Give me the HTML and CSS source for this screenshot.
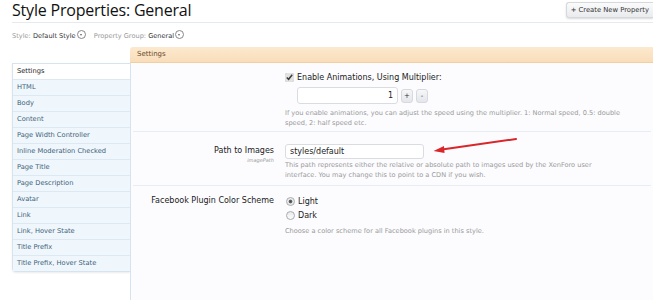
FILE: index.html
```html
<!DOCTYPE html>
<html lang="en">
<head>
    <meta charset="UTF-8">
    <title>Style Properties: General</title>
    <link rel="stylesheet" href="styles.css">
</head>
<body>
    <!-- Title bar -->
    <div class="title-bar">
        <h1>Style Properties: General</h1>
        <a class="top-button" href="#">+ Create New Property</a>
    </div>

    <!-- Style / group selectors -->
    <div class="selectors">
        <span class="muted">Style:</span> Default Style<span class="chooser"></span>
        <span class="muted gap">Property Group:</span> General<span class="chooser"></span>
    </div>

    <div class="layout">
        <!-- Property group list -->
        <ul class="side-list">
            <li class="active">Settings</li>
            <li>HTML</li>
            <li>Body</li>
            <li>Content</li>
            <li>Page Width Controller</li>
            <li>Inline Moderation Checked</li>
            <li>Page Title</li>
            <li>Page Description</li>
            <li>Avatar</li>
            <li>Link</li>
            <li>Link, Hover State</li>
            <li>Title Prefix</li>
            <li>Title Prefix, Hover State</li>
        </ul>

        <div class="main">
            <div class="section-head">Settings</div>

            <div class="form">
                <div class="row">
                    <div class="row-label"></div>
                    <div class="row-control">
                        <label class="check"><input type="checkbox" checked> Enable Animations, Using Multiplier:</label>
                        <div class="spinner">
                            <input type="text" class="text-box short" value="1">
                            <button class="spin">+</button>
                            <button class="spin">-</button>
                        </div>
                        <p class="hint">If you enable animations, you can adjust the speed using the multiplier. 1: Normal speed, 0.5: double speed, 2: half speed etc.</p>
                    </div>
                </div>

                <div class="row path-row">
                    <div class="row-label">
                        Path to Images
                        <span class="var-name">imagePath</span>
                    </div>
                    <div class="row-control">
                        <div class="path-line">
                            <input type="text" class="text-box" value="styles/default">
                            <!-- red annotation arrow -->
                            <svg class="arrow" viewBox="0 0 84 16" width="84" height="16">
                                <path d="M83 1 L9 11.5" stroke="#d9262b" stroke-width="2" fill="none" stroke-linecap="round"/>
                                <path d="M0.5 13 L11 8 L11.5 15 Z" fill="#d9262b"/>
                            </svg>
                        </div>
                        <p class="hint">This path represents either the relative or absolute path to images used by the XenForo user interface. You may change this to point to a CDN if you wish.</p>
                    </div>
                </div>

                <div class="row last">
                    <div class="row-label">Facebook Plugin Color Scheme</div>
                    <div class="row-control">
                        <label class="radio"><input type="radio" name="fb" checked> Light</label>
                        <label class="radio"><input type="radio" name="fb"> Dark</label>
                        <p class="hint">Choose a color scheme for all Facebook plugins in this style.</p>
                    </div>
                </div>
            </div>
        </div>
    </div>
</body>
</html>
```

FILE: styles.css
```css
/* Global styles */
:root {
    --text-color: #222;
    --muted-color: #999;
    --blue-border: #d6e4ef;
    --blue-bg: #f0f7fc;
    --blue-text: #3d5f7a;
}

body {
    font-family: 'DejaVu Sans', Verdana, sans-serif;
    font-size: 8px;
    background-color: #fff;
    color: var(--text-color);
    margin: 0;
    height: 300px;
    overflow: hidden;
}

/* Title bar */
.title-bar {
    display: flex;
    justify-content: space-between;
    align-items: flex-start;
    margin-left: 12px;
    height: 22px;
    border-bottom: 1px solid #e6e9ee;
}

.title-bar h1 {
    margin: 0;
    padding-top: 1px;
    font-family: 'Open Sans', sans-serif;
    font-weight: 400;
    font-size: 16px;
    letter-spacing: -0.2px;
    line-height: 19px;
    color: #111;
}

.top-button {
    margin-top: 2px;
    padding: 0 4px;
    height: 14px;
    line-height: 14px;
    font-size: 6.8px;
    color: #333;
    text-decoration: none;
    background: linear-gradient(#fbfbfb, #e9ebee);
    border: 1px solid #d5d8dd;
    border-right: none;
    border-radius: 3px 0 0 3px;
    box-shadow: 0 1px 2px rgba(0, 0, 0, 0.15);
}

/* Selectors */
.selectors {
    margin: 7px 0 0 12px;
    font-size: 6.6px;
    line-height: 10px;
    color: #333;
}

.muted {
    color: var(--muted-color);
}

.gap {
    margin-left: 6px;
}

.chooser {
    display: inline-block;
    width: 7px;
    height: 7px;
    margin-left: 1px;
    vertical-align: -1px;
    border: 1px solid #888;
    border-radius: 50%;
    position: relative;
}

.chooser::after {
    content: '';
    position: absolute;
    left: 2px;
    top: 3px;
    border-left: 1.5px solid transparent;
    border-right: 1.5px solid transparent;
    border-top: 2px solid #666;
}

/* Layout */
.layout {
    display: flex;
    margin: 6px 0 0 12px;
}

.side-list {
    list-style: none;
    margin: 16px 0 0 0;
    padding: 0;
    width: 117px;
    flex: none;
    border: 1px solid var(--blue-border);
    border-right: none;
    border-radius: 0 0 0 4px;
    align-self: flex-start;
    box-shadow: 0 1px 2px rgba(0, 0, 0, 0.08);
}

.side-list li {
    height: 15px;
    line-height: 15px;
    padding-left: 4px;
    font-size: 6.7px;
    color: var(--blue-text);
    background-color: var(--blue-bg);
    border-top: 1px solid #dde9f2;
}

.side-list li:first-child {
    border-top: none;
}

.side-list li.active {
    background-color: #fff;
    color: #222;
}

.main {
    flex: 1;
    min-width: 0;
}

.section-head {
    height: 15px;
    line-height: 15px;
    padding-left: 7px;
    font-size: 7px;
    color: #6a4b2c;
    background: linear-gradient(#fce9d0, #f9ddb9);
    border-bottom: 1px solid #f0cfa2;
    border-top-left-radius: 3px;
}

.form {
    border-left: 1px solid var(--blue-border);
    background-color: #fcfcfe;
    height: 238px;
    padding-right: 2px;
}

/* Form rows */
.row {
    display: flex;
    border-bottom: 1px solid #e6eef4;
    margin-left: 2px;
    padding: 7px 0 3px;
}

.row.path-row {
    padding: 12px 0 5px;
}

.row.last {
    padding-top: 8px;
    border-bottom: none;
}

.row-label {
    width: 141px;
    flex: none;
    text-align: right;
    font-size: 8px;
    line-height: 10px;
    color: #222;
}

.path-row .row-label {
    padding-top: 2px;
}

.last .row-label {
    padding-top: 2px;
}

.var-name {
    display: block;
    font-size: 5px;
    line-height: 8px;
    font-style: italic;
    color: var(--muted-color);
}

.row-control {
    padding-left: 11px;
    flex: 1;
}

.check,
.radio {
    display: flex;
    align-items: center;
    height: 14px;
    font-size: 8px;
}

.check input {
    width: 9px;
    height: 9px;
    margin: 0 3px 0 0;
    accent-color: #e2e2e2;
}

/* Old style grey radio buttons */
.radio input {
    appearance: none;
    box-sizing: border-box;
    width: 9px;
    height: 9px;
    margin: 0 3px 0 1px;
    border: 1px solid #a9abae;
    border-radius: 50%;
    background: linear-gradient(#e9eaec, #fdfdfd);
}

.radio input:checked {
    background: radial-gradient(circle, #4a4a4a 0, #6a6a6a 1.6px, #e4e5e7 2.2px, #fafafa 100%);
}

.spinner {
    display: flex;
    align-items: center;
    margin: 3px 0 0 12px;
}

.text-box {
    box-sizing: border-box;
    width: 139px;
    height: 15px;
    padding: 0 4px;
    font-family: inherit;
    font-size: 8px;
    color: #222;
    border: 1px solid #d9dde2;
    border-radius: 3px;
    background: #fff;
}

.text-box.short {
    width: 101px;
    height: 17px;
    text-align: right;
}

.spin {
    width: 12px;
    height: 14px;
    margin-left: 3px;
    padding: 0;
    font-family: inherit;
    font-size: 7px;
    color: #333;
    background: linear-gradient(#f7f7f8, #e4e6ea);
    border: 1px solid #d6d9de;
    border-radius: 3px;
}

.hint {
    max-width: 337px;
    margin: 5px 0 0;
    font-size: 6.6px;
    line-height: 9.5px;
    color: var(--muted-color);
}

.path-row .hint {
    margin-top: 2px;
}

.last .hint {
    margin-top: 5px;
}

.path-line {
    display: flex;
    align-items: flex-start;
}

.arrow {
    margin: -6px 0 0 9px;
}
```
